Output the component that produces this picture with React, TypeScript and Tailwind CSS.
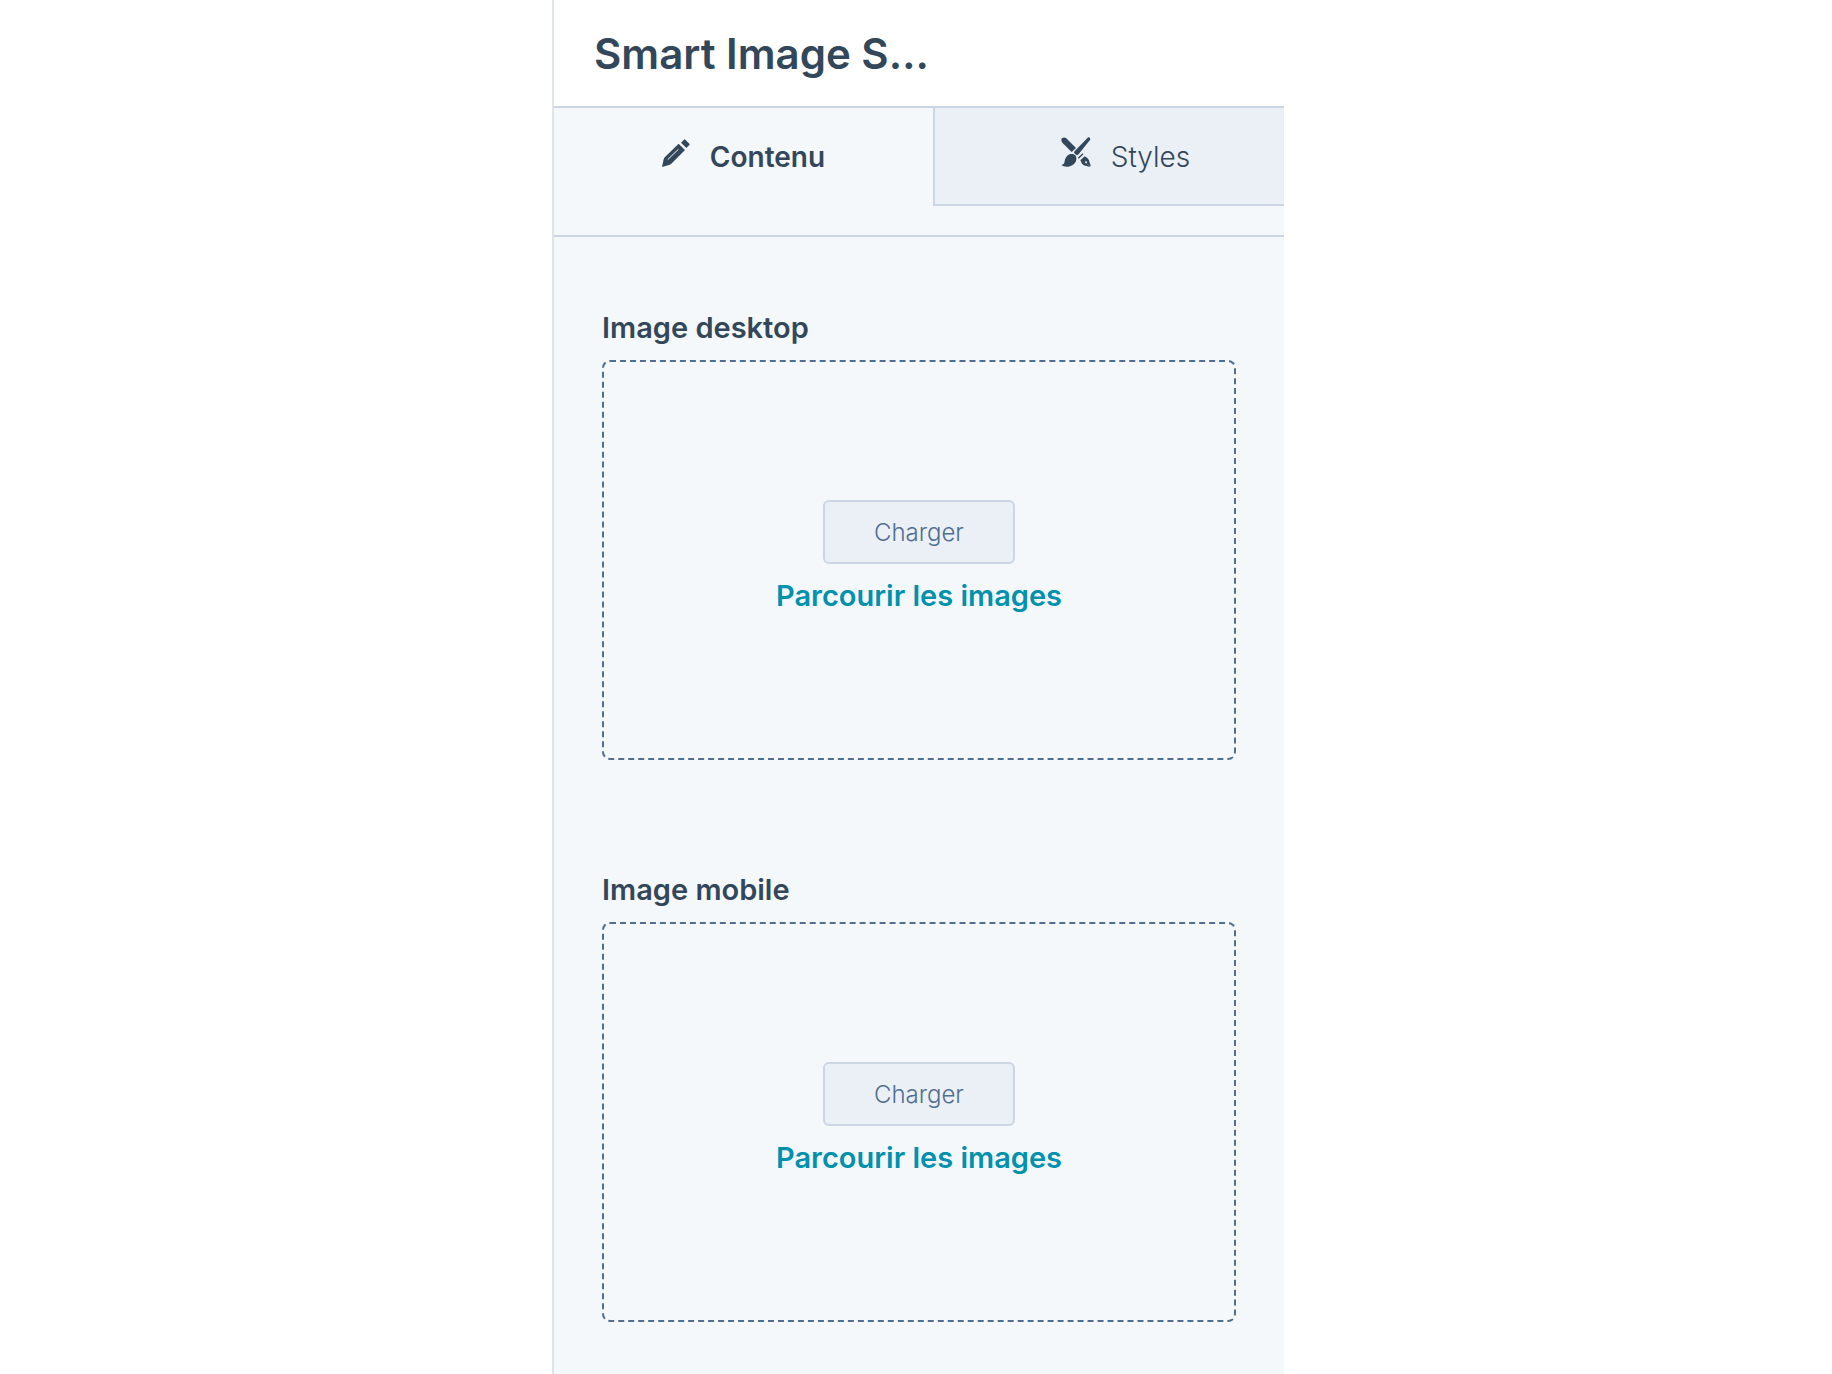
import { useState } from 'react'

interface ImageField {
  id: string
  label: string
}

const IMAGE_FIELDS: ImageField[] = [
  { id: 'image-desktop', label: 'Image desktop' },
  { id: 'image-mobile', label: 'Image mobile' },
]

function PencilIcon() {
  return (
    <svg className="w-7 h-7" viewBox="0 0 84 84" fill="currentColor" aria-hidden="true">
      <path d="M0 84L5 61Q6 57 9 54L50 14L69 33L28 74Q25 77 21 78Z" />
      <path d="M57 11L66 2Q68 0 70 2L82 14Q84 16 82 18L73 27Z" />
      <path d="M18 61L48 32" fill="none" stroke="#f5f8fa" strokeWidth="3" strokeLinecap="round" />
    </svg>
  )
}

function BrushPenIcon() {
  return (
    <svg className="w-[30px] h-[30px]" viewBox="0 0 90 90" fill="currentColor" aria-hidden="true">
      <path d="M1 8C1 2 10 -1 15 3L45 33L32 45L4 17Q1 13 1 8Z" />
      <path d="M80 2C84 -1 90 4 87 9L58 45C54 50 51 54 47 55L39 47C40 42 44 39 48 35Z" />
      <path d="M35 51Q45 53 46 63C47 78 35 88 20 89Q8 90 1 84Q10 83 11 73C13 57 24 49 35 51Z" />
      <path d="M52 64L66 50" fill="none" stroke="currentColor" strokeWidth="4" />
      <path
        fillRule="evenodd"
        d="M58 70L71 58L80 64Q85 69 86 77L89 85Q89 90 84 89L76 87Q67 86 63 80ZM75 73a3 3 0 1 0 0 6a3 3 0 1 0 0 -6Z"
      />
      <path d="M77 79L86 88" fill="none" stroke="#eaf0f6" strokeWidth="1" />
    </svg>
  )
}

function ImageUpload({ id, label }: ImageField) {
  return (
    <section aria-labelledby={id}>
      <h2 id={id} className="mb-2 text-[29px] leading-[48px] font-semibold">
        {label}
      </h2>
      <div className="flex h-[400px] flex-col items-center justify-center rounded-lg border-2 border-dashed border-[#516f90]">
        <button
          type="button"
          className="h-16 w-48 rounded-md border-2 border-[#cbd6e2] bg-[#eaf0f6] pt-0.5 text-2xl font-light text-[#506e91]"
        >
          Charger
        </button>
        <a href="#" className="mt-2 text-[29px] leading-[48px] font-semibold text-[#0091ae]">
          Parcourir les images
        </a>
      </div>
    </section>
  )
}

export default function App() {
  const [activeTab, setActiveTab] = useState('content')

  return (
    <div className="min-h-screen bg-white pl-1 font-['Inter',sans-serif] text-[#33475b]">
      <main className="mx-auto flex min-h-screen w-full max-w-[732px] flex-col overflow-hidden border-l-2 border-[#dfe3eb] bg-[#f5f8fa]">
        <header className="border-b-2 border-[#cbd6e2] bg-white px-10 pt-6 pb-[22px]">
          <h1 className="truncate text-[42px] leading-[60px] font-semibold">Smart Image S…</h1>
        </header>

        <div role="tablist" className="flex border-b-2 border-[#cbd6e2] pb-[29px]">
          <button
            type="button"
            role="tab"
            aria-selected={activeTab === 'content'}
            onClick={() => setActiveTab('content')}
            className="flex h-[98px] w-[379px] shrink-0 items-baseline justify-center gap-5 pt-[29px] text-[28px] leading-10 font-semibold"
          >
            <PencilIcon />
            Contenu
          </button>
          <button
            type="button"
            role="tab"
            aria-selected={activeTab === 'styles'}
            onClick={() => setActiveTab('styles')}
            className="flex h-[98px] w-[383px] shrink-0 items-baseline justify-center gap-5 border-b-2 border-l-2 border-[#cbd6e2] bg-[#eaf0f6] pt-[29px] text-[28px] leading-10 font-light"
          >
            <BrushPenIcon />
            Styles
          </button>
        </div>

        <div className="flex flex-col gap-[106px] px-12 pt-[67px] pb-[52px]">
          {IMAGE_FIELDS.map((field) => (
            <ImageUpload key={field.id} {...field} />
          ))}
        </div>
      </main>
    </div>
  )
}
